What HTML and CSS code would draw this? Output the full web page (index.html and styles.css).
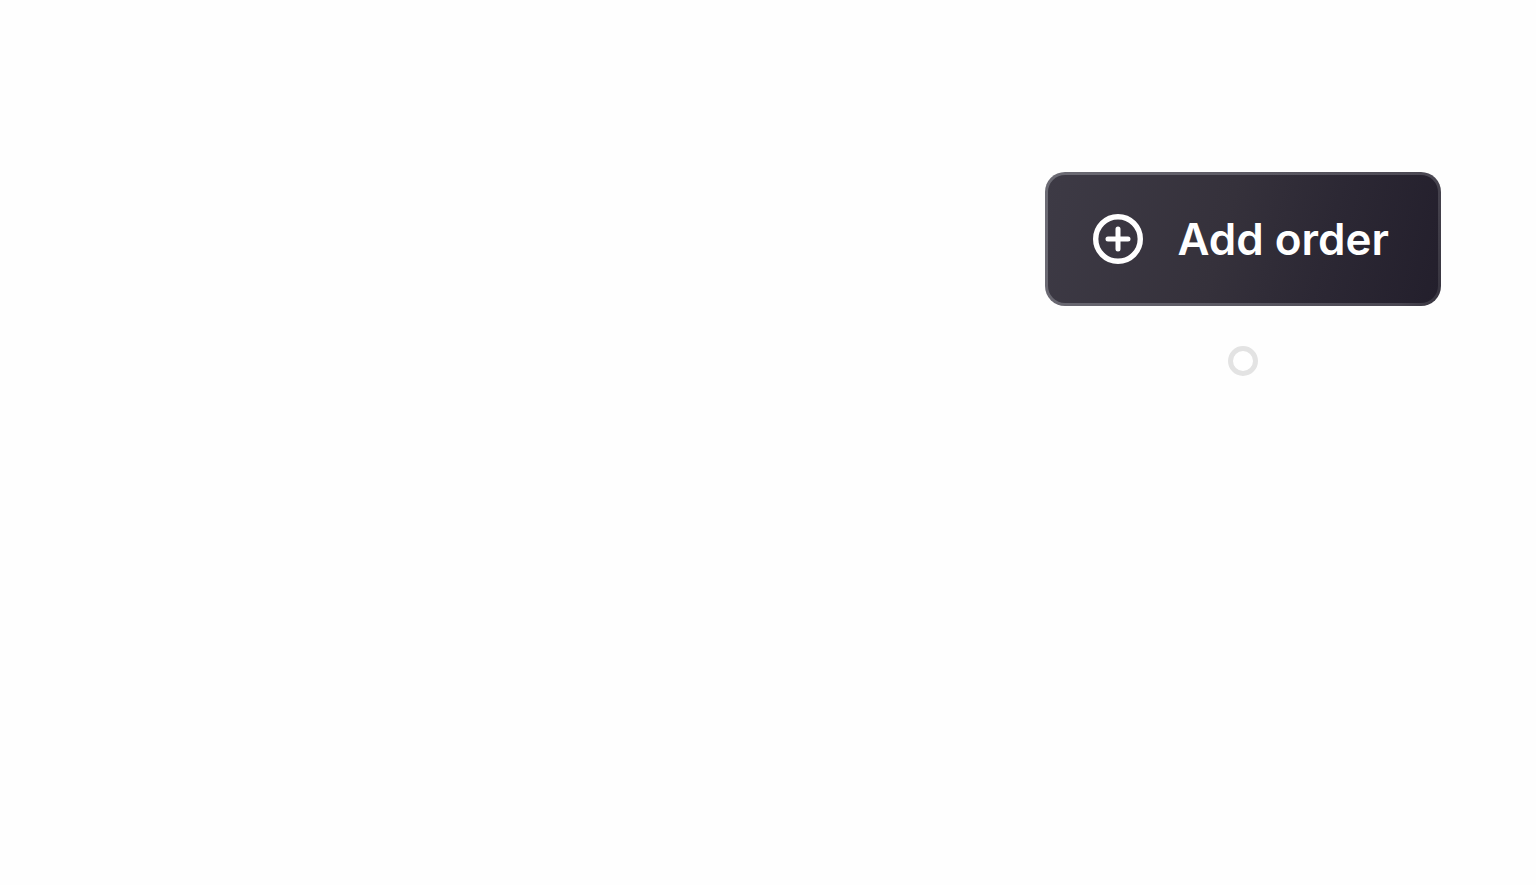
FILE: index.html
```html
<!DOCTYPE html>
<html lang="en">
<head>
  <meta charset="UTF-8">
  <meta name="viewport" content="width=device-width, initial-scale=1">
  <title>Add order</title>
  <link rel="stylesheet" href="styles.css">
</head>
<body>
  <main class="page">
    <div class="action">
      <button type="button" class="add-button">
        <svg class="add-icon" viewBox="0 0 50 50" fill="none" stroke="currentColor" stroke-linecap="round" aria-hidden="true">
          <circle cx="25" cy="25" r="22.3" stroke-width="5.4"/>
          <path d="M25 15v20M15 25h20" stroke-width="5"/>
        </svg>
        Add order
      </button>
      <span class="marker"></span>
    </div>
  </main>
</body>
</html>
```

FILE: styles.css
```css
body {
  margin: 0;
  background-color: #fefefe;
  font-family: Inter, "Liberation Sans", sans-serif;
}
.page {
  display: flex;
  justify-content: flex-end;
  padding: 172px 95px 40px;
}
.action {
  display: flex;
  flex-direction: column;
  align-items: center;
  gap: 40px;
}
.add-button {
  display: flex;
  align-items: center;
  gap: 34px;
  padding: 39px 49px 39px 45px;
  border: 3px solid transparent;
  border-radius: 20px;
  background:
    linear-gradient(105deg, #3d3a45 0%, #35313b 45%, #2c2834 70%, #231f2c 100%) padding-box,
    linear-gradient(105deg, #6c6b74 0%, #5b5963 50%, #4a4752 90%, #36333e 100%) border-box;
  color: #fff;
  font-family: inherit;
  font-size: 44px;
  font-weight: 600;
  line-height: 48px;
  white-space: nowrap;
  cursor: pointer;
}
.add-icon {
  width: 50px;
  height: 50px;
}
.marker {
  box-sizing: border-box;
  width: 30px;
  height: 30px;
  border: 5px solid #e3e3e3;
  border-radius: 50%;
  background-color: #fff;
}
```
